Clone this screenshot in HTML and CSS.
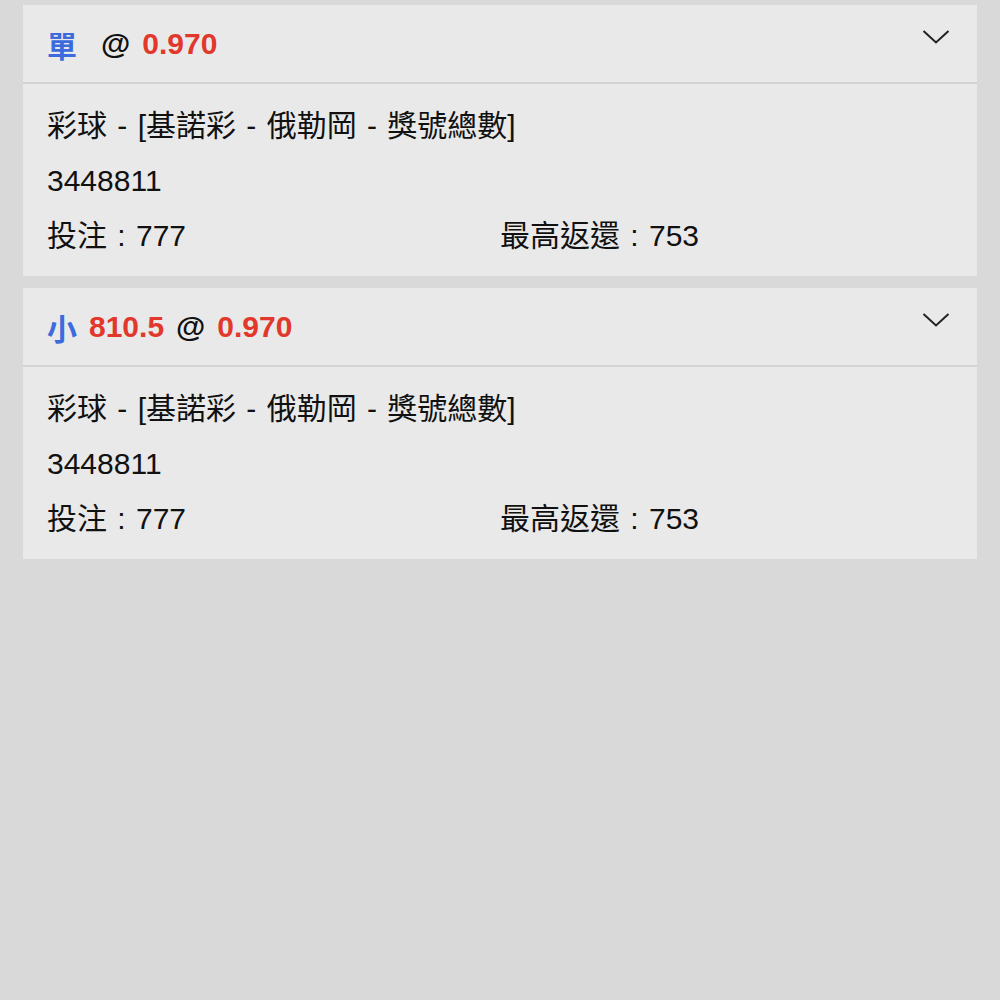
FILE: index.html
```html
<!DOCTYPE html>
<html lang="zh-Hant">
<head>
    <meta charset="UTF-8">
    <meta name="viewport" content="width=device-width, initial-scale=1.0">
    <title>注單</title>
    <link rel="stylesheet" href="styles.css">
</head>
<body>
    <div class="list">
        <div class="bet">
            <div class="bet-head">
                <div class="pick">
                    <span class="side">單</span>
                    <span class="line"></span>
                    <span class="at">@</span>
                    <span class="odds">0.970</span>
                </div>
                <svg class="chevron" width="28" height="16" viewBox="0 0 28 16">
                    <path d="M1.5 2 L14 13.5 L26.5 2" fill="none" stroke="#222" stroke-width="2"/>
                </svg>
            </div>
            <div class="bet-body">
                <div class="row">彩球 - [基諾彩 - 俄勒岡 - 獎號總數]</div>
                <div class="row">3448811</div>
                <div class="row cols">
                    <span>投注 : 777</span>
                    <span>最高返還 : 753</span>
                </div>
            </div>
        </div>
        <div class="bet">
            <div class="bet-head">
                <div class="pick">
                    <span class="side">小</span>
                    <span class="line">810.5</span>
                    <span class="at">@</span>
                    <span class="odds">0.970</span>
                </div>
                <svg class="chevron" width="28" height="16" viewBox="0 0 28 16">
                    <path d="M1.5 2 L14 13.5 L26.5 2" fill="none" stroke="#222" stroke-width="2"/>
                </svg>
            </div>
            <div class="bet-body">
                <div class="row">彩球 - [基諾彩 - 俄勒岡 - 獎號總數]</div>
                <div class="row">3448811</div>
                <div class="row cols">
                    <span>投注 : 777</span>
                    <span>最高返還 : 753</span>
                </div>
            </div>
        </div>
    </div>
</body>
</html>
```

FILE: styles.css
```css
html, body {
    margin: 0;
    background: #d9d9d9;
}
body {
    font-family: "Liberation Sans", "Noto Sans CJK TC", sans-serif;
    color: #111;
    min-height: 1000px;
}
.list {
    padding: 5px 23px;
    display: flex;
    flex-direction: column;
    gap: 12px;
}
.bet {
    background: #e9e9e9;
}
.bet-head {
    display: flex;
    align-items: center;
    justify-content: space-between;
    padding: 0 27px 0 24px;
    border-bottom: 2px solid #d3d3d3;
    box-sizing: border-box;
    height: 79px;
}
.pick {
    display: flex;
    align-items: center;
    gap: 12px;
    font-size: 30px;
    font-weight: bold;
}
.side {
    color: #3b6bdc;
}
.line, .odds {
    color: #e2372b;
}
.at {
    color: #111;
}
.chevron {
    align-self: flex-start;
    margin-top: 24px;
}
.bet-body {
    padding: 14px 24px 13px;
    font-size: 30px;
    word-spacing: 2px;
}
.row {
    line-height: 55px;
    height: 55px;
}
.cols {
    display: grid;
    grid-template-columns: 1fr 1fr;
}
```
